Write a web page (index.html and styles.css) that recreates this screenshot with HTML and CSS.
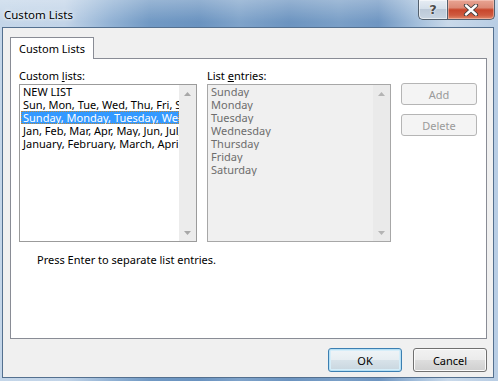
FILE: index.html
```html
<!DOCTYPE html>
<html>
<head>
<meta charset="utf-8">
<title>Custom Lists</title>
<link rel="stylesheet" href="styles.css">
</head>
<body>
<div class="window">
  <div class="titlebar">
    <span class="title">Custom Lists</span>
    <div class="caption">
      <div class="cap-btn help"><span class="help-glyph">?</span></div>
      <div class="cap-btn close">
        <svg width="16" height="12" viewBox="0 0 16 12">
          <path d="M3 1.5 L13 10.5 M13 1.5 L3 10.5" stroke="#3b3b3b" stroke-width="4.2" stroke-linecap="round" fill="none"/>
          <path d="M3 1.5 L13 10.5 M13 1.5 L3 10.5" stroke="#ffffff" stroke-width="2.4" stroke-linecap="round" fill="none"/>
        </svg>
      </div>
    </div>
  </div>
  <div class="client">
    <div class="tabs"><div class="tab">Custom Lists</div></div>
    <div class="panel">
      <div class="grid">
        <div class="lbl">Custom <u>l</u>ists:</div>
        <div class="lbl">List <u>e</u>ntries:</div>
        <div></div>
        <div class="listbox">
          <div class="items">
            <div class="item">NEW LIST</div>
            <div class="item">Sun, Mon, Tue, Wed, Thu, Fri, Sat</div>
            <div class="item selected">Sunday, Monday, Tuesday, Wednesday, Thursday, Friday, Saturday</div>
            <div class="item">Jan, Feb, Mar, Apr, May, Jun, Jul, Aug, Sep, Oct, Nov, Dec</div>
            <div class="item">January, February, March, April, May, June, July, August, September, October, November, December</div>
          </div>
          <div class="scrollbar">
            <div class="arrow"><svg width="7" height="4" viewBox="0 0 7 4"><polygon points="0,4 3.5,0 7,4" fill="#a7a7a7"/></svg></div>
            <div class="arrow"><svg width="7" height="4" viewBox="0 0 7 4"><polygon points="0,0 3.5,4 7,0" fill="#a7a7a7"/></svg></div>
          </div>
        </div>
        <div class="listbox disabled">
          <div class="items">
            <div class="item">Sunday</div>
            <div class="item">Monday</div>
            <div class="item">Tuesday</div>
            <div class="item">Wednesday</div>
            <div class="item">Thursday</div>
            <div class="item">Friday</div>
            <div class="item">Saturday</div>
          </div>
          <div class="scrollbar">
            <div class="arrow"><svg width="7" height="4" viewBox="0 0 7 4"><polygon points="0,4 3.5,0 7,4" fill="#b4b4b4"/></svg></div>
            <div class="arrow"><svg width="7" height="4" viewBox="0 0 7 4"><polygon points="0,0 3.5,4 7,0" fill="#b4b4b4"/></svg></div>
          </div>
        </div>
        <div class="side">
          <div class="sbtn add">Add</div>
          <div class="sbtn">Delete</div>
        </div>
      </div>
      <div class="note">Press Enter to separate list entries.</div>
    </div>
    <div class="footer">
      <div class="btn default">OK</div>
      <div class="btn">Cancel</div>
    </div>
  </div>
</div>
</body>
</html>
```

FILE: styles.css
```css
* { box-sizing: border-box; }
html, body { margin: 0; padding: 0; }
body {
  width: 498px;
  height: 381px;
  overflow: hidden;
  font-family: "Segoe UI", "Noto Sans", sans-serif;
  font-size: 11px;
  color: #000;
}
.window {
  width: 498px;
  height: 381px;
  display: flex;
  flex-direction: column;
  padding: 0 4px 3px 2px;
  background:
    linear-gradient(180deg, rgba(255,255,255,0.28) 0px, rgba(255,255,255,0) 22px),
    linear-gradient(90deg, #c4d6e9 0%, #c2d4e8 13%, #93b3d5 22%, #7199c4 30%, #6a93c0 40%, #7fa3ca 48%, #6c94c0 58%, #7a9fc7 68%, #6f96c2 76%, #a5c0dc 84%, #c9d9ea 90%, #b8cde4 100%);
}
.titlebar {
  height: 27px;
  display: flex;
  align-items: flex-start;
  flex: none;
}
.title {
  padding: 7px 0 0 2px;
  font-size: 11.5px;
  line-height: 16px;
  text-shadow: 0 0 6px rgba(255,255,255,0.9), 0 0 3px rgba(255,255,255,0.9);
}
.caption {
  margin-left: auto;
  display: flex;
  margin-right: -1px;
}
.cap-btn {
  height: 20px;
  display: flex;
  align-items: center;
  justify-content: center;
  border: 1px solid #53606e;
  border-top: none;
}
.help {
  width: 29px;
  border-radius: 0 0 0 5px;
  border-right: none;
  background: linear-gradient(180deg, #e7edf4 0%, #d5dfea 45%, #bcc9d8 50%, #c9d5e2 100%);
  box-shadow: inset 0 0 0 1px rgba(255,255,255,0.55);
}
.help-glyph {
  font-family: "DejaVu Sans", sans-serif;
  font-weight: bold;
  font-size: 13px;
  color: #4b4b4b;
  text-shadow: 0 0 2px #fff, 0 0 1px #fff;
  margin-top: -1px;
}
.close {
  width: 48px;
  border-radius: 0 0 5px 0;
  background: linear-gradient(180deg, #e8a493 0%, #dc8a76 40%, #c8462b 52%, #cf5a3f 80%, #e08a6a 100%);
  box-shadow: inset 0 0 0 1px rgba(255,220,210,0.45);
}
.client {
  flex: 1;
  display: flex;
  flex-direction: column;
  background: #f0f0f0;
  border: 1px solid #54708f;
  padding: 9px 6px 0 7px;
}
.tabs {
  display: flex;
  flex: none;
}
.tab {
  width: 84px;
  height: 22px;
  background: #fff;
  border: 1px solid #898c95;
  border-bottom: none;
  padding: 3px 0 0 8px;
  line-height: 16px;
  margin-bottom: -1px;
  position: relative;
  z-index: 1;
}
.panel {
  flex: none;
  height: 281px;
  background: #fff;
  border: 1px solid #898c95;
  padding: 9px 8px 0 8px;
}
.grid {
  display: grid;
  grid-template-columns: 178px 184px 76px;
  grid-template-rows: 16px 158px;
  column-gap: 10px;
}
.lbl {
  line-height: 15px;
}
.listbox {
  border: 1px solid #9b9b9b;
  background: #fff;
  display: flex;
  overflow: hidden;
}
.listbox.disabled {
  background: #f0f0f0;
  border-color: #a7a7a7;
}
.items {
  flex: 1;
  min-width: 0;
  overflow: hidden;
}
.item {
  height: 13px;
  line-height: 13px;
  white-space: nowrap;
  overflow: hidden;
  padding-left: 2px;
  margin-left: 1px;
}
.item.selected {
  background: #3399ff;
  color: #fff;
  outline: 1px dotted #c08a3c;
  outline-offset: -1px;
}
.disabled .item {
  color: #6d6d6d;
}
.scrollbar {
  width: 17px;
  flex: none;
  background: #ececec;
  display: flex;
  flex-direction: column;
  justify-content: space-between;
}
.disabled .scrollbar {
  background: #eaeaea;
}
.arrow {
  height: 17px;
  display: flex;
  align-items: center;
  justify-content: center;
}
.side {
  display: flex;
  flex-direction: column;
  gap: 9px;
}
.sbtn {
  height: 22px;
  border: 1px solid #b5b5b5;
  border-radius: 3px;
  background: #f4f4f4;
  color: #9a9a9a;
  display: flex;
  align-items: center;
  justify-content: center;
}
.sbtn.add {
  margin-top: -1px;
}
.note {
  margin: 10px 0 0 18px;
  line-height: 15px;
}
.footer {
  display: flex;
  justify-content: flex-end;
  gap: 11px;
  margin-top: 9px;
  flex: none;
}
.btn {
  width: 74px;
  height: 24px;
  border: 1px solid #707070;
  border-radius: 3px;
  background: linear-gradient(180deg, #f2f2f2 0%, #ebebeb 48%, #dddddd 52%, #cfcfcf 100%);
  box-shadow: inset 0 0 0 1px #fbfbfb;
  display: flex;
  align-items: center;
  justify-content: center;
}
.btn.default {
  border-color: #3c7fb1;
  box-shadow: inset 0 0 0 1px #b6e0f5, inset 0 0 0 2px #d6eef9;
  background: linear-gradient(180deg, #f0f5f8 0%, #e7eef2 48%, #d7e2e9 52%, #c8d6df 100%);
}
```
